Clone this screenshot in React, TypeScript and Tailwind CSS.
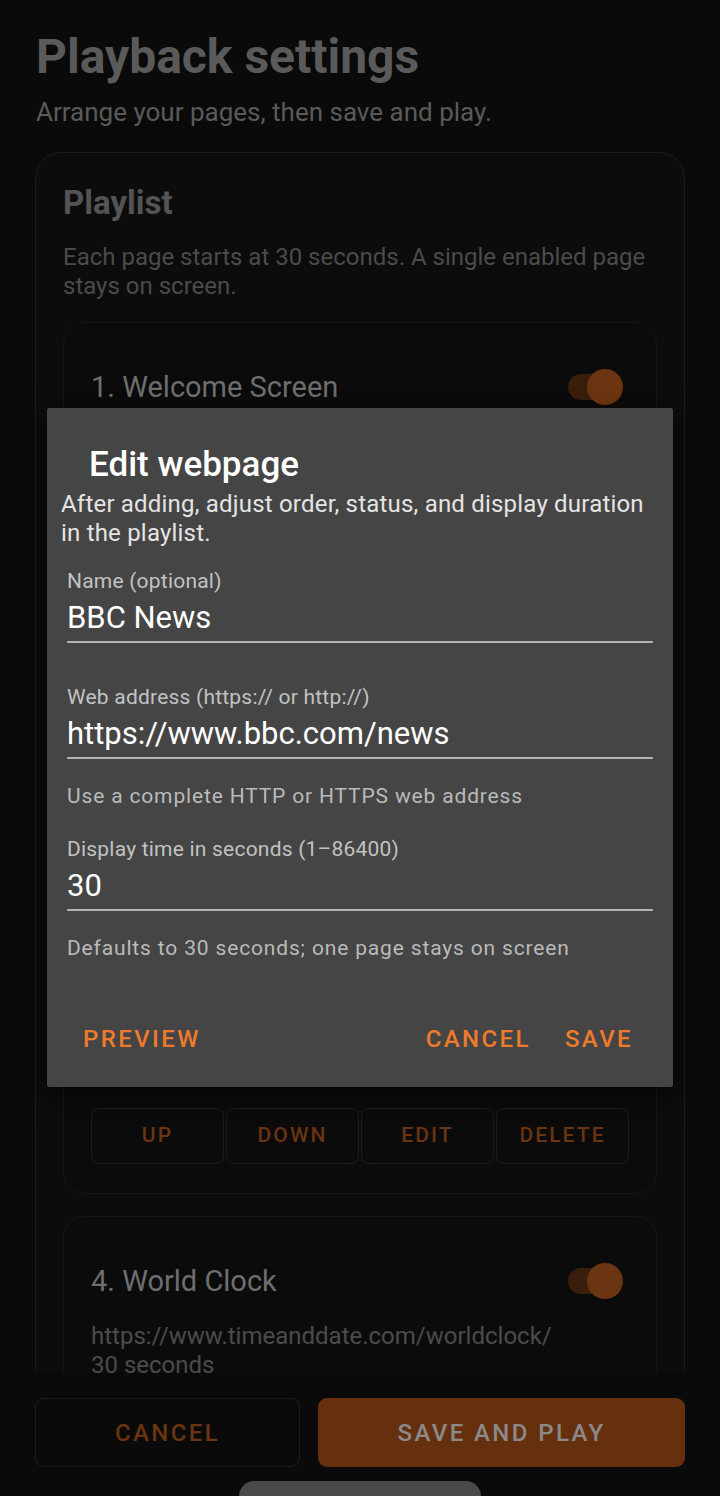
import React from "react";

const font = { fontFamily: "Roboto, 'Noto Sans', sans-serif" };

function Toggle() {
  return (
    <div className="relative mr-[6px] w-[55px] h-[36px] flex items-center">
      <div className="w-[46px] h-[26px] rounded-full bg-[#3a1e0c]" />
      <div className="absolute right-0 top-0 w-[36px] h-[36px] rounded-full bg-[#6c3511]" />
    </div>
  );
}

function Item({ n, title, url }: { n: number; title: string; url: string }) {
  return (
    <div className="rounded-[22px] border border-[#161616] bg-[#0b0b0b] px-[27px] pt-[46px] pb-[29px]">
      <div className="flex items-center justify-between">
        <div className="text-[29px] leading-[36px] text-[#6e6e6e]">
          {n}. {title}
        </div>
        <Toggle />
      </div>
      <div className="mt-[23px] text-[24px] leading-[29px] text-[#4b4b4b]">
        <div>{url}</div>
        <div>30 seconds</div>
      </div>
      <div className="mt-[26px] grid grid-cols-4 gap-[2px]">
        {["UP", "DOWN", "EDIT", "DELETE"].map((b) => (
          <div
            key={b}
            className="h-[56px] rounded-[8px] border border-[#1c1c1c] flex items-center justify-center text-[21px] font-medium tracking-[0.1em] text-[#6a3411]"
          >
            {b}
          </div>
        ))}
      </div>
    </div>
  );
}

function Field({ label, value }: { label: string; value: string }) {
  return (
    <div>
      <div className="text-[21px] leading-[24px] text-[#c2c2c2] tracking-[0.01em]">{label}</div>
      <div className="mt-[7px] text-[31px] leading-[36px] text-white">{value}</div>
      <div className="mt-[5px] h-[2px] bg-[#b3b3b3]" />
    </div>
  );
}

export default function App() {
  return (
    <div className="relative w-[720px] h-[1496px] bg-[#0a0a0a] flex flex-col overflow-hidden" style={font}>
      <div className="flex-1 overflow-hidden pl-[35px] pr-[35px]">
        <div className="pt-[29px] pl-[1px] text-[48px] leading-[56px] font-bold text-[#5a5a5a]">
          Playback settings
        </div>
        <div className="mt-[11px] pl-[1px] text-[26px] leading-[32px] text-[#5a5a5a]">
          Arrange your pages, then save and play.
        </div>
        <div className="mt-[24px] rounded-[26px] border border-[#1c1c1c] bg-[#0c0c0c] px-[27px] pt-[32px] pb-[28px]">
          <div className="text-[33px] leading-[36px] font-bold text-[#545454]">Playlist</div>
          <div className="mt-[22px] text-[24px] leading-[29px] text-[#4b4b4b]">
            Each page starts at 30 seconds. A single enabled page stays on screen.
          </div>
          <div className="mt-[21px] flex flex-col gap-[22px]">
            <Item n={1} title="Welcome Screen" url="https://example.com/welcome" />
            <Item n={2} title="Company Dashboard" url="https://example.com/dashboard" />
            <Item n={3} title="BBC News" url="https://www.bbc.com/news" />
            <Item n={4} title="World Clock" url="https://www.timeanddate.com/worldclock/" />
          </div>
        </div>
      </div>

      <div className="h-[123px] shrink-0 bg-[#0a0a0a] px-[35px] pt-[25px] flex flex-col">
        <div className="flex gap-[18px]">
          <div className="w-[265px] h-[69px] rounded-[9px] border border-[#1c1c1c] flex items-center justify-center text-[24px] font-medium tracking-[0.1em] text-[#6a3411]">
            CANCEL
          </div>
          <div className="flex-1 h-[69px] rounded-[9px] bg-[#66300f] flex items-center justify-center text-[24px] font-medium tracking-[0.1em] text-[#8a8a8a]">
            SAVE AND PLAY
          </div>
        </div>
        <div className="mt-[14px] self-center w-[242px] h-[30px] rounded-t-[16px] bg-[#4a4a4a]" />
      </div>

      <div className="absolute left-[47px] top-[408px] w-[626px] h-[679px] rounded-[2px] bg-[#454545] shadow-[0_8px_24px_rgba(0,0,0,0.5)] px-[14px] pt-[37px] pb-[24px] flex flex-col">
        <div className="pl-[28px] text-[35px] leading-[40px] font-medium text-white">Edit webpage</div>
        <div className="mt-[5px] text-[24px] leading-[29px] tracking-[0.2px] text-[#e4e4e4]">
          After adding, adjust order, status, and display duration in the playlist.
        </div>
        <div className="px-[6px]">
          <div className="mt-[21px]">
            <Field label="Name (optional)" value="BBC News" />
          </div>
          <div className="mt-[42px]">
            <Field label="Web address (https:// or http://)" value="https://www.bbc.com/news" />
          </div>
          <div className="mt-[25px] text-[21px] leading-[24px] text-[#bababa] tracking-[0.04em]">
            Use a complete HTTP or HTTPS web address
          </div>
          <div className="mt-[29px]">
            <Field label="Display time in seconds (1–86400)" value="30" />
          </div>
          <div className="mt-[25px] text-[21px] leading-[24px] text-[#bababa] tracking-[0.04em]">
            Defaults to 30 seconds; one page stays on screen
          </div>
        </div>
        <div className="mt-auto flex items-center h-[48px] text-[24px] font-medium tracking-[0.1em] text-[#ee7a2c]">
          <div className="pl-[22px]">PREVIEW</div>
          <div className="ml-auto">CANCEL</div>
          <div className="ml-[34px] mr-[26px]">SAVE</div>
        </div>
      </div>
    </div>
  );
}
